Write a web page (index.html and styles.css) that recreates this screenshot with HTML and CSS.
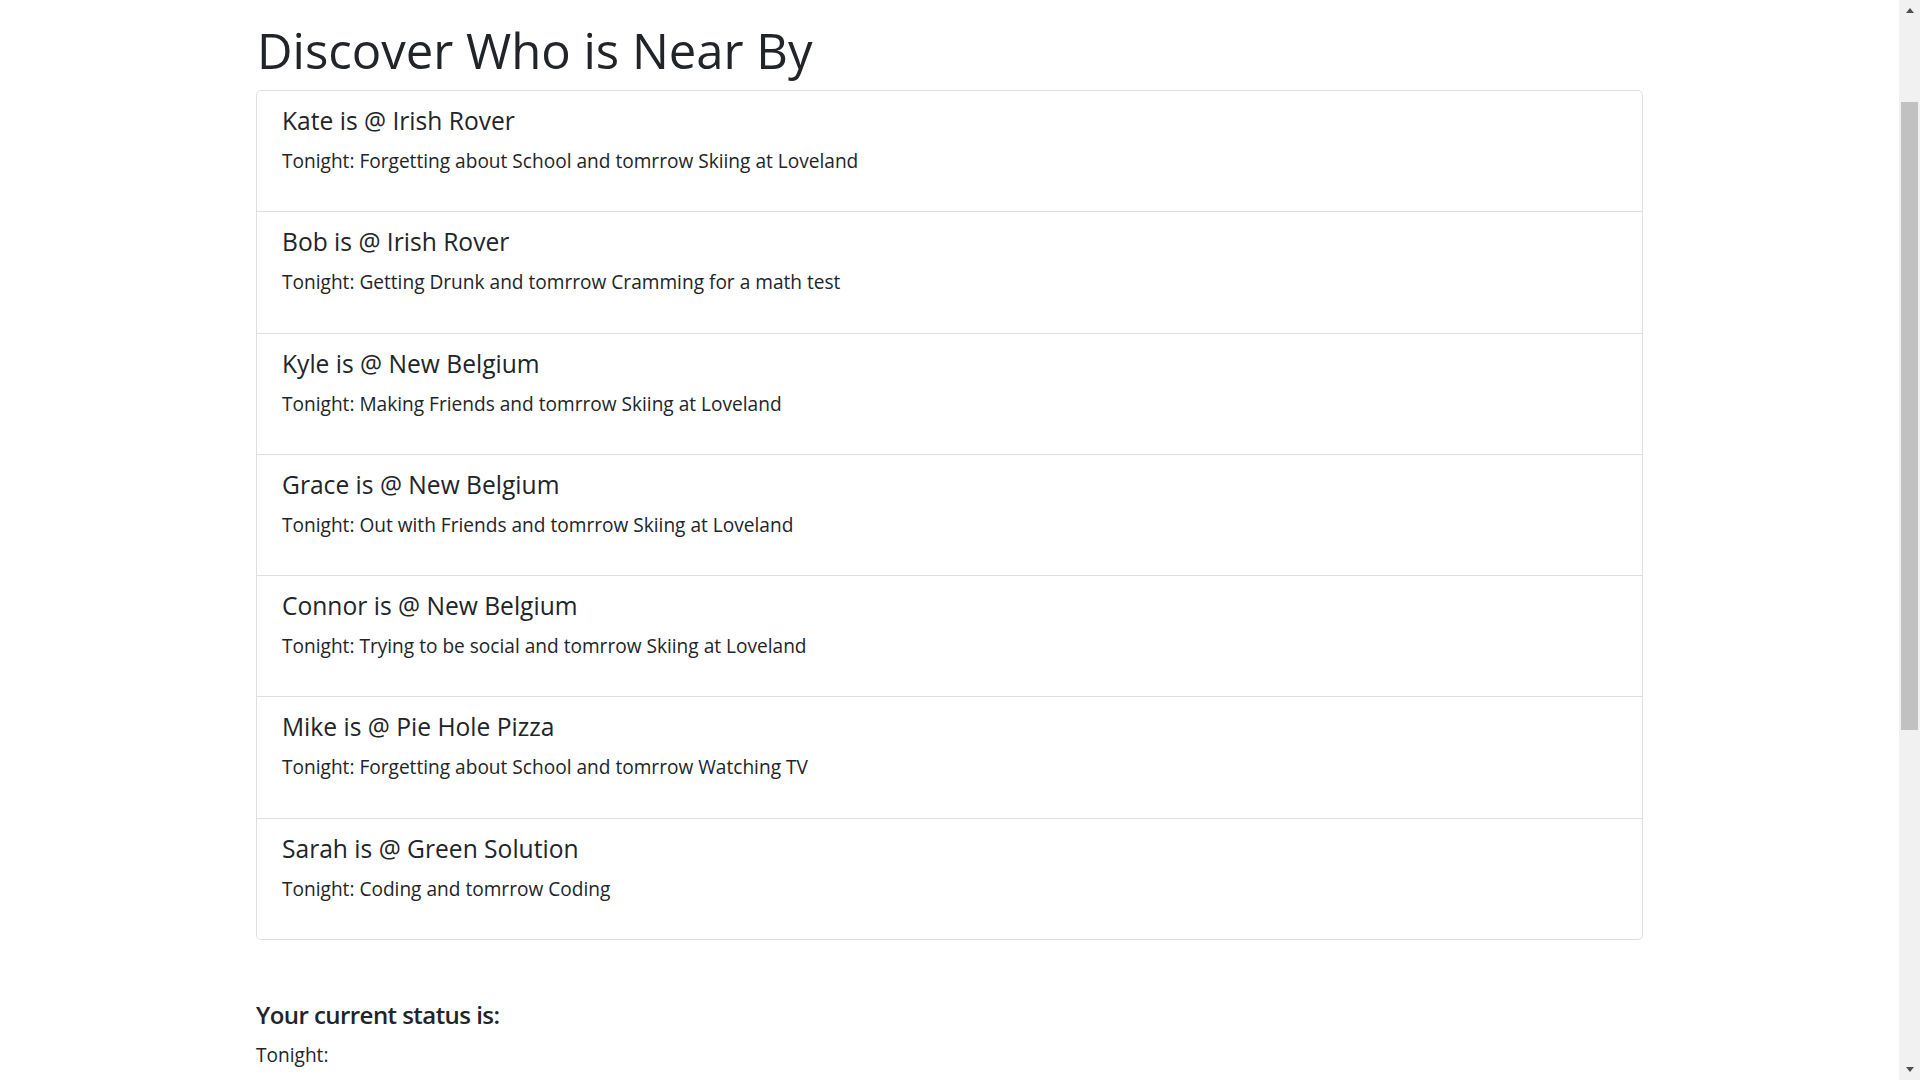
FILE: index.html
```html
<!DOCTYPE html>
<html lang="en">
<head>
<meta charset="utf-8">
<title>Discover Who is Near By</title>
<link rel="stylesheet" href="styles.css">
</head>
<body>
<main class="container">
  <h1 class="page-title">Discover Who is Near By</h1>
  <ul class="list-group">
    <li class="list-item">
      <h5 class="item-title">Kate is @ Irish Rover</h5>
      <p class="item-text">Tonight: Forgetting about School and tomrrow Skiing at Loveland</p>
    </li>
    <li class="list-item">
      <h5 class="item-title">Bob is @ Irish Rover</h5>
      <p class="item-text">Tonight: Getting Drunk and tomrrow Cramming for a math test</p>
    </li>
    <li class="list-item">
      <h5 class="item-title">Kyle is @ New Belgium</h5>
      <p class="item-text">Tonight: Making Friends and tomrrow Skiing at Loveland</p>
    </li>
    <li class="list-item">
      <h5 class="item-title">Grace is @ New Belgium</h5>
      <p class="item-text">Tonight: Out with Friends and tomrrow Skiing at Loveland</p>
    </li>
    <li class="list-item">
      <h5 class="item-title">Connor is @ New Belgium</h5>
      <p class="item-text">Tonight: Trying to be social and tomrrow Skiing at Loveland</p>
    </li>
    <li class="list-item">
      <h5 class="item-title">Mike is @ Pie Hole Pizza</h5>
      <p class="item-text">Tonight: Forgetting about School and tomrrow Watching TV</p>
    </li>
    <li class="list-item">
      <h5 class="item-title">Sarah is @ Green Solution</h5>
      <p class="item-text">Tonight: Coding and tomrrow Coding</p>
    </li>
  </ul>
  <section class="status">
    <h5 class="status-title">Your current status is:</h5>
    <p class="status-text">Tonight:</p>
  </section>
</main>
<div class="faux-scrollbar" aria-hidden="true">
  <span class="sb-arrow sb-up"></span>
  <span class="sb-thumb"></span>
  <span class="sb-arrow sb-down"></span>
</div>
<script src="script.js"></script>
</body>
</html>
```
FILE: styles.css
```css
html, body {
  margin: 0;
  padding: 0;
  background: #fff;
}

body {
  font-family: "Open Sans", "Noto Sans", sans-serif;
  font-size: 19px;
  line-height: 30px;
  color: #212529;
}

.container {
  width: 1387px;
  margin-left: 256px;
  padding: 159px 0 556px 0;
  box-sizing: content-box;
}

.page-title {
  margin: 0 0 10px 0;
  font-size: 49px;
  line-height: 60px;
  font-weight: 400;
  padding-left: 1px;
}

.list-group {
  list-style: none;
  margin: 0;
  padding: 0;
  border: 1px solid #dfdfdf;
  border-radius: 5px;
}

.list-item {
  padding: 15.125px 25px;
  border-top: 1px solid #dfdfdf;
}

.list-item:first-child {
  border-top: 0;
}

.item-title {
  margin: 0 0 10px 0;
  font-size: 24.6px;
  line-height: 30px;
  font-weight: 400;
}

.item-text {
  margin: 0 0 20px 0;
  font-size: 19.1px;
  line-height: 30px;
}

.status {
  margin-top: 60px;
}

.status-title {
  margin: 0 0 10px 0;
  font-size: 24px;
  line-height: 30px;
  font-weight: 600;
  letter-spacing: -0.55px;
}

.status-text {
  margin: 0 0 20px 0;
  font-size: 19.1px;
  line-height: 30px;
}

/* real scrollbar styling (used when the browser draws classic scrollbars) */
::-webkit-scrollbar {
  width: 21px;
  background: #f1f1f1;
}

::-webkit-scrollbar-thumb {
  background: #c1c1c1;
  border-left: 2px solid #f1f1f1;
  border-right: 2px solid #f1f1f1;
}

/* stand-in scrollbar, shown only when the browser hides its own */
.faux-scrollbar {
  display: none;
}

.has-faux .faux-scrollbar {
  display: flex;
  flex-direction: column;
  align-items: center;
  position: fixed;
  top: 0;
  right: 0;
  width: 21px;
  height: 100vh;
  background: #f1f1f1;
}

.sb-arrow {
  width: 0;
  height: 0;
  border-left: 4.5px solid transparent;
  border-right: 4.5px solid transparent;
}

.sb-up {
  margin-top: 8px;
  border-bottom: 5px solid #505050;
}

.sb-thumb {
  width: 17px;
  height: 628px;
  margin-top: 89px;
  background: #c1c1c1;
}

.sb-down {
  margin-top: auto;
  margin-bottom: 8px;
  border-top: 5px solid #505050;
}
```
FILE: script.js
```js
(function () {
  var hidden = window.innerWidth - document.documentElement.clientWidth === 0;
  if (hidden) {
    document.body.classList.add('has-faux');
  }
  window.scrollTo(0, 139);
  window.addEventListener('load', function () { window.scrollTo(0, 139); });
})();
```
